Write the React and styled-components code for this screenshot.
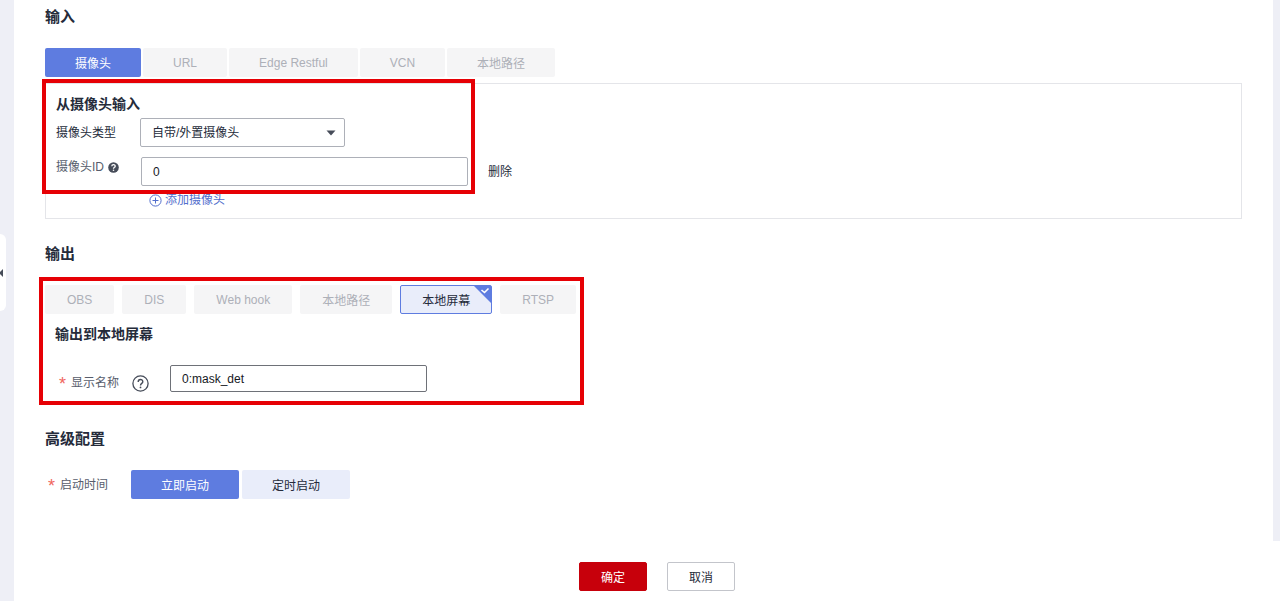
import React, { useState } from "react"
import styled, { createGlobalStyle, css } from "styled-components"

const GlobalStyle = createGlobalStyle`
  * {
    box-sizing: border-box;
  }
  body {
    margin: 0;
    background: #fff;
    color: #252b3a;
    font-family: "Liberation Sans", "Noto Sans CJK SC", sans-serif;
    font-size: 12px;
    line-height: 20px;
  }
  button,
  input,
  select {
    font-family: inherit;
    font-size: inherit;
    color: inherit;
    margin: 0;
  }
`

const Page = styled.div`
  display: flex;
  min-height: 100vh;
`
const SideRail = styled.aside`
  flex: 0 0 14px;
  background: #eeeff6;
  padding-top: 234px;
`
const CollapseHandle = styled.button`
  display: flex;
  align-items: center;
  width: 6px;
  height: 77px;
  padding: 0;
  border: 0;
  border-radius: 0 6px 6px 0;
  background: #fff;
`
const Main = styled.form`
  flex: 1;
  min-width: 0;
  display: flex;
  flex-direction: column;
`
const Body = styled.div`
  display: flex;
`
const Content = styled.div`
  flex: 1;
  min-width: 0;
  padding: 7px 31px 42px;
`
const RightRail = styled.div`
  flex: 0 0 7px;
  background: #eeeff6;
`

const SectionTitle = styled.h2`
  margin: ${p => p.$top || 0}px 0 0;
  font-size: 15px;
  line-height: 20px;
  font-weight: 700;
`
const SubTitle = styled.h3`
  margin: 0;
  font-size: 14px;
  line-height: 20px;
  font-weight: 700;
`

const Tabs = styled.div`
  display: flex;
  gap: ${p => p.$gap}px;
  margin-top: ${p => p.$top || 0}px;
`
const filled = css`
  background: #5e7ce0;
  color: #fff;
`
const Tab = styled.button`
  height: 29px;
  padding: 0 30px;
  border: 0;
  border-radius: 2px;
  background: #e9edfa;
  white-space: nowrap;
  ${p => p.$active && filled}
  &:disabled {
    background: #f5f5f6;
    color: #adb0b8;
  }
`
const OutputTab = styled(Tab)`
  position: relative;
  padding: 0 21px;
  border: 1px solid ${p => (p.$active ? "#5e7ce0" : "transparent")};
  background: #e9edfa;
  color: #252b3a;
`
const Corner = styled.svg`
  position: absolute;
  top: 0;
  right: 0;
`

const Panel = styled.div`
  position: relative;
  margin-top: 6px;
  padding: 10px 10px 8px;
  border: 1px solid #e4e5e9;
`
const Highlight = styled.div`
  position: absolute;
  top: -5px;
  left: -4px;
  width: 433px;
  height: 115px;
  border: 4px solid #e60005;
  pointer-events: none;
`
const Framed = styled.div`
  width: fit-content;
  margin: 13px 0 0 -6px;
  padding: 4px 4px 8px 2px;
  border: 4px solid #e60005;
`
const FramedInner = styled.div`
  padding: 10px 0 0 10px;
`

const Row = styled.div`
  display: flex;
  align-items: center;
  margin-top: ${p => p.$top}px;
  padding-left: ${p => p.$indent || 0}px;
`
const Label = styled.label`
  color: ${p => (p.$dark ? "#252b3a" : "#575d6c")};
`
const LabelCell = styled.div`
  display: flex;
  align-items: center;
  gap: 4px;
  width: ${p => p.$width}px;
  align-self: ${p => (p.$start ? "flex-start" : "center")};
`
const Star = styled.span`
  width: 12px;
  height: 20px;
  padding-top: 5px;
  color: #f0665e;
  font-size: 18px;
  line-height: 12px;
`
const SelectWrap = styled.div`
  position: relative;
  width: 205px;
`
const Select = styled.select`
  appearance: none;
  width: 100%;
  height: 29px;
  padding: 0 28px 0 11px;
  border: 1px solid #adb0b8;
  border-radius: 2px;
  background: #fff;
`
const Caret = styled.svg`
  position: absolute;
  top: 12px;
  right: 9px;
  pointer-events: none;
`
const Input = styled.input`
  width: ${p => p.$width}px;
  height: ${p => p.$height || 29}px;
  padding: 0 11px;
  border: 1px solid ${p => p.$border || "#adb0b8"};
  border-radius: 2px;
  background: #fff;
  color: #16181e;
`
const TextButton = styled.button`
  display: flex;
  align-items: center;
  gap: 3px;
  padding: 0;
  border: 0;
  background: none;
  line-height: 20px;
  color: ${p => (p.$link ? "#526ecc" : "#252b3a")};
`
const DeleteButton = styled(TextButton)`
  margin-left: 20px;
`

const Footer = styled.footer`
  display: flex;
  justify-content: center;
  gap: 20px;
  padding: 21px 0 10px 20px;
`
const FooterButton = styled.button`
  width: 68px;
  height: 29px;
  padding: 0;
  border: 1px solid ${p => (p.$primary ? "#c7000b" : "#c3c5cb")};
  border-radius: 2px;
  background: ${p => (p.$primary ? "#c7000b" : "#fff")};
  color: ${p => (p.$primary ? "#fff" : "#252b3a")};
`

const inputTabs = ["摄像头", "URL", "Edge Restful", "VCN", "本地路径"]
const outputTabs = ["OBS", "DIS", "Web hook", "本地路径", "本地屏幕", "RTSP"]
const startModes = ["立即启动", "定时启动"]

const HelpSolid = () => (
  <svg width="11" height="11" viewBox="0 0 11 11" fill="none">
    <circle cx="5.5" cy="5.5" r="5.3" fill="#464c59" />
    <path
      d="M3.8 4.3C3.8 2.2 7.2 2.2 7.2 4.2C7.2 5.4 5.5 5.3 5.5 6.7"
      stroke="#fff"
      strokeWidth="1.3"
    />
    <circle cx="5.5" cy="8.3" r="0.8" fill="#fff" />
  </svg>
)

const HelpOutline = () => (
  <svg width="17" height="17" viewBox="0 0 17 17" fill="none">
    <circle cx="8.5" cy="8.5" r="7.6" stroke="#464c59" strokeWidth="1.3" />
    <path
      d="M6.2 6.9C6.2 3.7 10.8 3.8 10.8 6.7C10.8 8.4 8.5 8.4 8.5 10.4"
      stroke="#464c59"
      strokeWidth="1.4"
    />
    <circle cx="8.5" cy="12.4" r="0.9" fill="#464c59" />
  </svg>
)

const PlusCircle = () => (
  <svg width="13" height="13" viewBox="0 0 13 13" fill="none" stroke="#526ecc">
    <circle cx="6.5" cy="6.5" r="5.6" />
    <path d="M6.5 3.5V9.5M3.5 6.5H9.5" />
  </svg>
)

export default function App() {
  const [cameraId, setCameraId] = useState("0")
  const [displayName, setDisplayName] = useState("0:mask_det")
  const [startMode, setStartMode] = useState("立即启动")

  return (
    <Page>
      <GlobalStyle />
      <SideRail>
        <CollapseHandle type="button" aria-label="收起">
          <svg width="3" height="8" viewBox="0 0 3 8">
            <path d="M3 0V8L0 5V3Z" fill="#464c59" />
          </svg>
        </CollapseHandle>
      </SideRail>
      <Main onSubmit={e => e.preventDefault()}>
        <Body>
          <Content>
            <SectionTitle>输入</SectionTitle>
            <Tabs $gap={2} $top={21}>
              {inputTabs.map((name, i) => (
                <Tab key={name} type="button" $active={i === 0} disabled={i > 0}>
                  {name}
                </Tab>
              ))}
            </Tabs>
            <Panel>
              <SubTitle>从摄像头输入</SubTitle>
              <Row $top={4}>
                <LabelCell $width={84}>
                  <Label $dark htmlFor="cameraType">
                    摄像头类型
                  </Label>
                </LabelCell>
                <SelectWrap>
                  <Select id="cameraType">
                    <option>自带/外置摄像头</option>
                  </Select>
                  <Caret width="10" height="6" viewBox="0 0 10 6">
                    <path d="M0.5 0.5H9.5L5 5.5Z" fill="#464c59" />
                  </Caret>
                </SelectWrap>
              </Row>
              <Row $top={10}>
                <LabelCell $width={85} $start>
                  <Label htmlFor="cameraId">摄像头ID</Label>
                  <HelpSolid />
                </LabelCell>
                <Input
                  id="cameraId"
                  $width={327}
                  value={cameraId}
                  onChange={e => setCameraId(e.target.value)}
                />
                <DeleteButton type="button">删除</DeleteButton>
              </Row>
              <Row $top={4} $indent={93}>
                <TextButton type="button" $link>
                  <PlusCircle />
                  添加摄像头
                </TextButton>
              </Row>
              <Highlight />
            </Panel>

            <SectionTitle $top={25}>输出</SectionTitle>
            <Framed>
              <Tabs $gap={8}>
                {outputTabs.map(name => {
                  const active = name === "本地屏幕"
                  return (
                    <OutputTab
                      key={name}
                      type="button"
                      $active={active}
                      disabled={!active}
                    >
                      {name}
                      {active && (
                        <Corner width="17" height="17" viewBox="0 0 17 17">
                          <path d="M0 0H17V17Z" fill="#5e7ce0" />
                          <path
                            d="M7.5 4L10.5 6.5L14.5 2.5"
                            fill="none"
                            stroke="#fff"
                            strokeWidth="1.6"
                          />
                        </Corner>
                      )}
                    </OutputTab>
                  )
                })}
              </Tabs>
              <FramedInner>
                <SubTitle>输出到本地屏幕</SubTitle>
                <Row $top={20} $indent={4}>
                  <LabelCell $width={111}>
                    <Label htmlFor="displayName">
                      <Row as="span" $top={9}>
                        <Star>*</Star>显示名称
                      </Row>
                    </Label>
                    <Row as="span" $top={9} $indent={9}>
                      <HelpOutline />
                    </Row>
                  </LabelCell>
                  <Input
                    id="displayName"
                    $width={257}
                    $height={27}
                    $border="#6e7178"
                    value={displayName}
                    onChange={e => setDisplayName(e.target.value)}
                  />
                </Row>
              </FramedInner>
            </Framed>

            <SectionTitle $top={24}>高级配置</SectionTitle>
            <Row $top={21} $indent={3}>
              <LabelCell $width={83}>
                <Label as="span" id="startLabel">
                  <Row as="span" $top={0}>
                    <Star>*</Star>启动时间
                  </Row>
                </Label>
              </LabelCell>
              <Tabs $gap={3} role="group" aria-labelledby="startLabel">
                {startModes.map(name => (
                  <Tab
                    key={name}
                    type="button"
                    $active={name === startMode}
                    onClick={() => setStartMode(name)}
                  >
                    {name}
                  </Tab>
                ))}
              </Tabs>
            </Row>
          </Content>
          <RightRail />
        </Body>
        <Footer>
          <FooterButton type="submit" $primary>
            确定
          </FooterButton>
          <FooterButton type="button">取消</FooterButton>
        </Footer>
      </Main>
    </Page>
  )
}
